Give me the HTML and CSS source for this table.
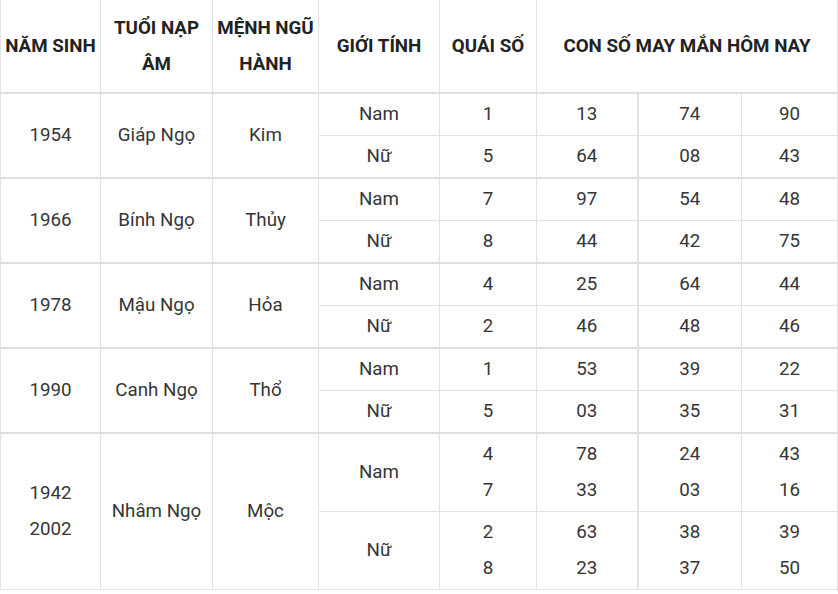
FILE: index.html
```html
<!DOCTYPE html>
<html lang="vi">
<head>
<meta charset="utf-8">
<title>Con số may mắn</title>
<link rel="stylesheet" href="styles.css">
</head>
<body>
<table class="lucky">
  <colgroup>
    <col class="c1"><col class="c2"><col class="c3"><col class="c4"><col class="c5"><col class="c6"><col class="c7"><col class="c8">
  </colgroup>
  <thead>
    <tr>
      <th>NĂM SINH</th>
      <th>TUỔI NẠP ÂM</th>
      <th>MỆNH NGŨ HÀNH</th>
      <th>GIỚI TÍNH</th>
      <th>QUÁI SỐ</th>
      <th colspan="3">CON SỐ MAY MẮN HÔM NAY</th>
    </tr>
  </thead>
  <tbody>
    <tr class="group">
      <td rowspan="2">1954</td><td rowspan="2">Giáp Ngọ</td><td rowspan="2">Kim</td>
      <td>Nam</td><td>1</td><td>13</td><td class="mid">74</td><td>90</td>
    </tr>
    <tr>
      <td>Nữ</td><td>5</td><td>64</td><td class="mid">08</td><td>43</td>
    </tr>
    <tr class="group">
      <td rowspan="2">1966</td><td rowspan="2">Bính Ngọ</td><td rowspan="2">Thủy</td>
      <td>Nam</td><td>7</td><td>97</td><td class="mid">54</td><td>48</td>
    </tr>
    <tr>
      <td>Nữ</td><td>8</td><td>44</td><td class="mid">42</td><td>75</td>
    </tr>
    <tr class="group">
      <td rowspan="2">1978</td><td rowspan="2">Mậu Ngọ</td><td rowspan="2">Hỏa</td>
      <td>Nam</td><td>4</td><td>25</td><td class="mid">64</td><td>44</td>
    </tr>
    <tr>
      <td>Nữ</td><td>2</td><td>46</td><td class="mid">48</td><td>46</td>
    </tr>
    <tr class="group">
      <td rowspan="2">1990</td><td rowspan="2">Canh Ngọ</td><td rowspan="2">Thổ</td>
      <td>Nam</td><td>1</td><td>53</td><td class="mid">39</td><td>22</td>
    </tr>
    <tr>
      <td>Nữ</td><td>5</td><td>03</td><td class="mid">35</td><td>31</td>
    </tr>
    <tr class="group">
      <td rowspan="2">1942<br>2002</td><td rowspan="2">Nhâm Ngọ</td><td rowspan="2">Mộc</td>
      <td>Nam</td><td>4<br>7</td><td>78<br>33</td><td class="mid">24<br>03</td><td>43<br>16</td>
    </tr>
    <tr>
      <td>Nữ</td><td>2<br>8</td><td>63<br>23</td><td class="mid">38<br>37</td><td>39<br>50</td>
    </tr>
  </tbody>
</table>
</body>
</html>
```
FILE: styles.css
```css
html, body {
  margin: 0;
  padding: 0;
  background: #fff;
}
body {
  font-family: Roboto, "Liberation Sans", Arial, sans-serif;
  color: #363636;
}
.lucky {
  border-collapse: collapse;
  table-layout: fixed;
  width: 837px;
  font-size: 18.75px;
}
.c1 { width: 100px; }
.c2 { width: 112px; }
.c3 { width: 106px; }
.c4 { width: 121px; }
.c5 { width: 97px; }
.c6 { width: 101px; }
.c7 { width: 104px; }
.c8 { width: 96px; }
.lucky th,
.lucky td {
  border: 1px solid #e2e2e2;
  text-align: center;
  vertical-align: middle;
  line-height: 36px;
}
.lucky th {
  font-weight: 700;
  color: #222;
  padding: 10px 1px 10px;
  border-top: none;
  border-bottom: 2px solid #dedede;
}
.lucky td {
  padding: 2px 4px 3px;
  font-weight: 400;
}
.lucky tr.group td {
  border-top: 2px solid #dedede;
}
.lucky td.mid {
  border-left: 2px solid #e2e2e2;
}
```
